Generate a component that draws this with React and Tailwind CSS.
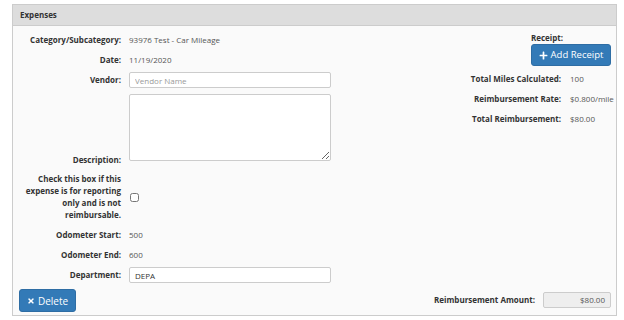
import { FaPlus, FaTimes } from 'react-icons/fa';

const Row = ({ label, children, h = 'h-[20px]' }) => (
    <div className={`flex items-center ${h}`}>
        <div className="w-[108px] text-right font-bold text-[#333]">{label}</div>
        <div className="ml-[8px] flex-1 text-[#555]">{children}</div>
    </div>
);

const Stat = ({ label, value }) => (
    <div className="flex items-center h-[20px] mr-[5px]">
        <div className="flex-1 text-right font-bold text-[#333]">{label}</div>
        <div className="ml-[9px] w-[41px] text-[#555] whitespace-nowrap">{value}</div>
    </div>
);

export default function App() {
    return (
        <div className="w-[624px] h-[320px] bg-white pt-[4px] pl-[12px] pr-[7px] text-[8px] leading-[12px]" style={{ fontFamily: '"Open Sans", sans-serif' }}>
            <div className="border border-[#ccc] bg-[#fafafa]">

                {/* Header */}
                <div className="h-[21px] bg-[#ddd] border-b border-[#ccc] flex items-center px-[7px] font-bold text-[#333]">
                    Expenses
                </div>

                {/* Body */}
                <div className="flex pt-[4px] pb-[3px]">
                    <div className="w-[320px] flex flex-col">
                        <Row label="Category/Subcategory:">93976 Test - Car Mileage</Row>
                        <Row label="Date:">11/19/2020</Row>
                        <Row label="Vendor:">
                            <input
                                placeholder="Vendor Name"
                                className="w-[202px] h-[16px] bg-white border border-[#ccc] rounded-[2px] px-[5px] text-[8px] placeholder:text-[#999] outline-none"
                            />
                        </Row>
                        <div className="flex items-end mt-[4px]">
                            <div className="w-[108px] text-right font-bold text-[#333] relative top-[5px]">Description:</div>
                            <textarea className="ml-[8px] w-[202px] h-[67px] bg-white border border-[#ccc] rounded-[2px]" />
                        </div>
                        <div className="flex items-center mt-[12px]">
                            <div className="w-[108px] text-right font-bold text-[#333]">
                                Check this box if this expense is for reporting only and is not reimbursable.
                            </div>
                            <input type="checkbox" className="ml-[9px] w-[9px] h-[9px]" />
                        </div>
                        <div className="mt-[4px]">
                            <Row label="Odometer Start:">500</Row>
                            <Row label="Odometer End:">600</Row>
                            <Row label="Department:">
                                <input
                                    defaultValue="DEPA"
                                    className="w-[202px] h-[16px] bg-white border border-[#ccc] rounded-[2px] px-[5px] text-[8px] text-[#333] outline-none"
                                />
                            </Row>
                        </div>
                        <div className="pl-[6px] mt-[4px]">
                            <button className="h-[23px] w-[57px] bg-[#337ab7] border border-[#2e6da4] rounded-[3px] text-white text-[10px] flex items-center justify-center gap-[3px]">
                                <FaTimes size={8} />
                                Delete
                            </button>
                        </div>
                    </div>

                    <div className="flex-1 flex flex-col">
                        <div className="flex flex-col items-end pr-[5px]">
                            <div className="w-[80px] font-bold text-[#333] mt-[2px]">Receipt:</div>
                            <button className="w-[80px] h-[22px] bg-[#337ab7] border border-[#2e6da4] rounded-[3px] text-white text-[9.5px] flex items-center justify-center gap-[3px]">
                                <FaPlus size={9} />
                                Add Receipt
                            </button>
                        </div>
                        <div className="mt-[3px]">
                            <Stat label="Total Miles Calculated:" value="100" />
                            <Stat label="Reimbursement Rate:" value="$0.800/mile" />
                            <Stat label="Total Reimbursement:" value="$80.00" />
                        </div>
                        <div className="mt-auto flex items-center justify-end mb-[4px] pr-[5px]">
                            <div className="font-bold text-[#333]">Reimbursement Amount:</div>
                            <div className="ml-[8px] w-[68px] h-[16px] bg-[#eee] border border-[#ccc] rounded-[2px] text-right pr-[5px] leading-[14px] text-[#555]">$80.00</div>
                        </div>
                    </div>
                </div>
            </div>
        </div>
    );
}
